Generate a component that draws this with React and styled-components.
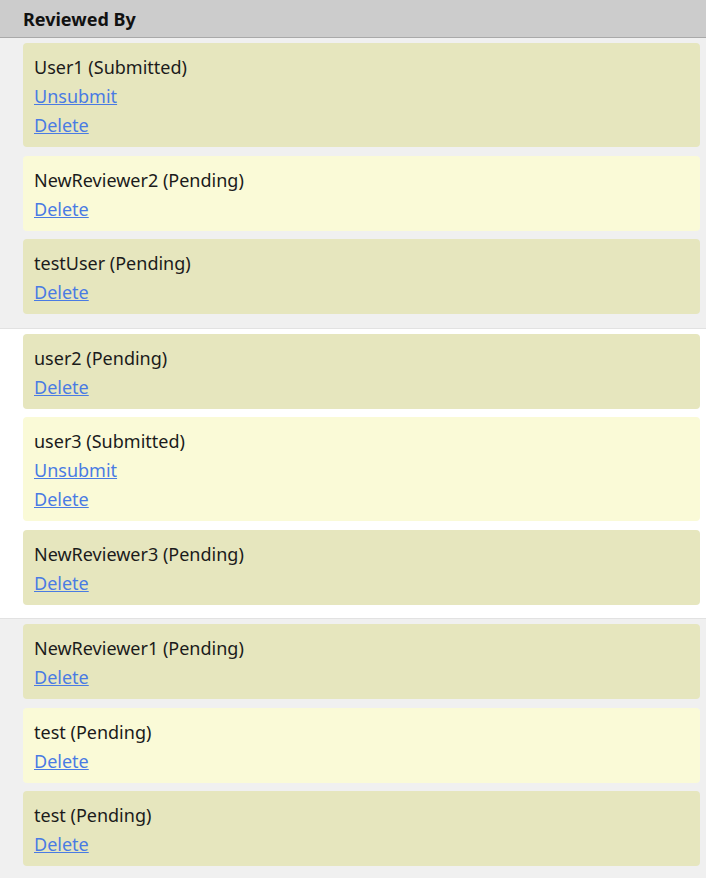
import React from "react";
import styled, { createGlobalStyle } from "styled-components";

const Global = createGlobalStyle`
  html, body { margin: 0; padding: 0; background: #ffffff; }
  body { font-family: "Noto Sans", "Open Sans", sans-serif; color: #1b1b1b; }
`;

const Panel = styled.div`
  width: 706px;
`;

const Header = styled.div`
  height: 37px;
  border-bottom: 1px solid #a9a9a9;
  background: #cccccc;
  display: flex;
  align-items: center;
  padding-left: 23px;
  font-size: 18px;
  font-weight: 700;
  color: #111;
`;

const Group = styled.div`
  background: ${(p) => (p.$white ? "#ffffff" : "#f0f0f0")};
  border-bottom: 1px solid #e2e2e2;
  padding: 5px 6px 13.5px 23px;
  display: flex;
  flex-direction: column;
  gap: 8.5px;
`;

const Card = styled.div`
  background: ${(p) => (p.$light ? "#fafad7" : "#e6e6be")};
  border-radius: 4px;
  padding: 10px 11px 7px;
  display: flex;
  flex-direction: column;
`;

const Name = styled.div`
  font-size: 18px;
  line-height: 29px;
`;

const Link = styled.a`
  font-size: 18px;
  line-height: 29px;
  color: #4a7be3;
  text-decoration: underline;
  cursor: pointer;
  align-self: flex-start;
`;

const groups = [
  [
    { name: "User1", status: "Submitted" },
    { name: "NewReviewer2", status: "Pending", light: true },
    { name: "testUser", status: "Pending" },
  ],
  [
    { name: "user2", status: "Pending" },
    { name: "user3", status: "Submitted", light: true },
    { name: "NewReviewer3", status: "Pending" },
  ],
  [
    { name: "NewReviewer1", status: "Pending" },
    { name: "test", status: "Pending", light: true },
    { name: "test", status: "Pending" },
  ],
];

export default function App() {
  return (
    <>
      <Global />
      <Panel>
        <Header>Reviewed By</Header>
        {groups.map((g, gi) => (
          <Group key={gi} $white={gi === 1}>
            {g.map((r, ri) => (
              <Card key={ri} $light={r.light}>
                <Name>
                  {r.name} ({r.status})
                </Name>
                {r.status === "Submitted" && <Link>Unsubmit</Link>}
                <Link>Delete</Link>
              </Card>
            ))}
          </Group>
        ))}
      </Panel>
    </>
  );
}
